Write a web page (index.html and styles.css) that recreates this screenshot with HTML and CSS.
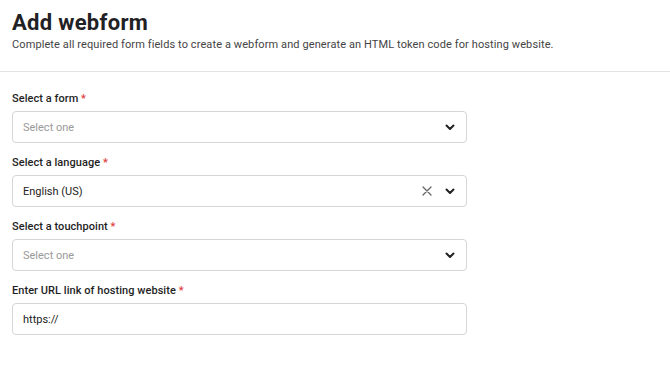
FILE: index.html
```html
<!DOCTYPE html>
<html lang="en">
<head>
    <meta charset="UTF-8">
    <meta name="viewport" content="width=device-width, initial-scale=1.0">
    <title>Add webform</title>
    <link rel="stylesheet" href="styles.css">
</head>
<body>
    <div class="page-header">
        <h1 class="page-title">Add webform</h1>
        <p class="page-subtitle">Complete all required form fields to create a webform and generate an HTML token code for hosting website.</p>
    </div>

    <form class="webform">
        <div class="field">
            <label class="field-label">Select a form <span class="required">*</span></label>
            <div class="select-box">
                <span class="placeholder">Select one</span>
                <span class="select-icons">
                    <svg class="chevron" width="10" height="7" viewBox="0 0 10 7"><path d="M1.5 1.5 L5 5 L8.5 1.5" fill="none" stroke="#222" stroke-width="2" stroke-linecap="round" stroke-linejoin="round"/></svg>
                </span>
            </div>
        </div>

        <div class="field">
            <label class="field-label">Select a language <span class="required">*</span></label>
            <div class="select-box">
                <span class="value">English (US)</span>
                <span class="select-icons">
                    <svg class="clear" width="10" height="10" viewBox="0 0 10 10"><path d="M1 1 L9 9 M9 1 L1 9" fill="none" stroke="#666" stroke-width="1.3" stroke-linecap="round"/></svg>
                    <svg class="chevron" width="10" height="7" viewBox="0 0 10 7"><path d="M1.5 1.5 L5 5 L8.5 1.5" fill="none" stroke="#222" stroke-width="2" stroke-linecap="round" stroke-linejoin="round"/></svg>
                </span>
            </div>
        </div>

        <div class="field">
            <label class="field-label">Select a touchpoint <span class="required">*</span></label>
            <div class="select-box">
                <span class="placeholder">Select one</span>
                <span class="select-icons">
                    <svg class="chevron" width="10" height="7" viewBox="0 0 10 7"><path d="M1.5 1.5 L5 5 L8.5 1.5" fill="none" stroke="#222" stroke-width="2" stroke-linecap="round" stroke-linejoin="round"/></svg>
                </span>
            </div>
        </div>

        <div class="field">
            <label class="field-label">Enter URL link of hosting website <span class="required">*</span></label>
            <input class="text-input" type="text" value="https://">
        </div>
    </form>
</body>
</html>
```

FILE: styles.css
```css
* {
    margin: 0;
    padding: 0;
    box-sizing: border-box;
}

body {
    font-family: Roboto, "Liberation Sans", sans-serif;
    background: #fff;
    color: #222;
}

.page-header {
    padding: 11px 12px 18px;
    border-bottom: 1px solid #e3e3e3;
}

.page-title {
    font-size: 22px;
    line-height: 24px;
    font-weight: 700;
    letter-spacing: 0.3px;
    color: #1f2124;
}

.page-subtitle {
    margin-top: 2px;
    font-size: 11px;
    line-height: 16px;
    letter-spacing: 0.1px;
    color: #444;
}

.webform {
    padding: 20px 12px;
    width: 479px;
}

.field {
    display: flex;
    flex-direction: column;
    gap: 5px;
    margin-bottom: 13px;
}

.field-label {
    font-size: 11px;
    line-height: 14px;
    font-weight: 500;
    letter-spacing: 0.05px;
    color: #1f1f1f;
}

.required {
    color: #e03a3a;
}

.select-box,
.text-input {
    height: 32px;
    border: 1px solid #d6d6d6;
    border-radius: 4px;
    background: #fff;
    font-family: inherit;
    font-size: 11px;
    color: #222;
}

.select-box {
    display: flex;
    align-items: center;
    justify-content: space-between;
    padding: 0 11px 0 10px;
}

.placeholder {
    color: #9a9a9a;
}

.select-icons {
    display: flex;
    align-items: center;
    gap: 13px;
}

.chevron {
    display: block;
}

.clear {
    display: block;
}

.text-input {
    width: 100%;
    padding: 0 10px;
    outline: none;
}
```
